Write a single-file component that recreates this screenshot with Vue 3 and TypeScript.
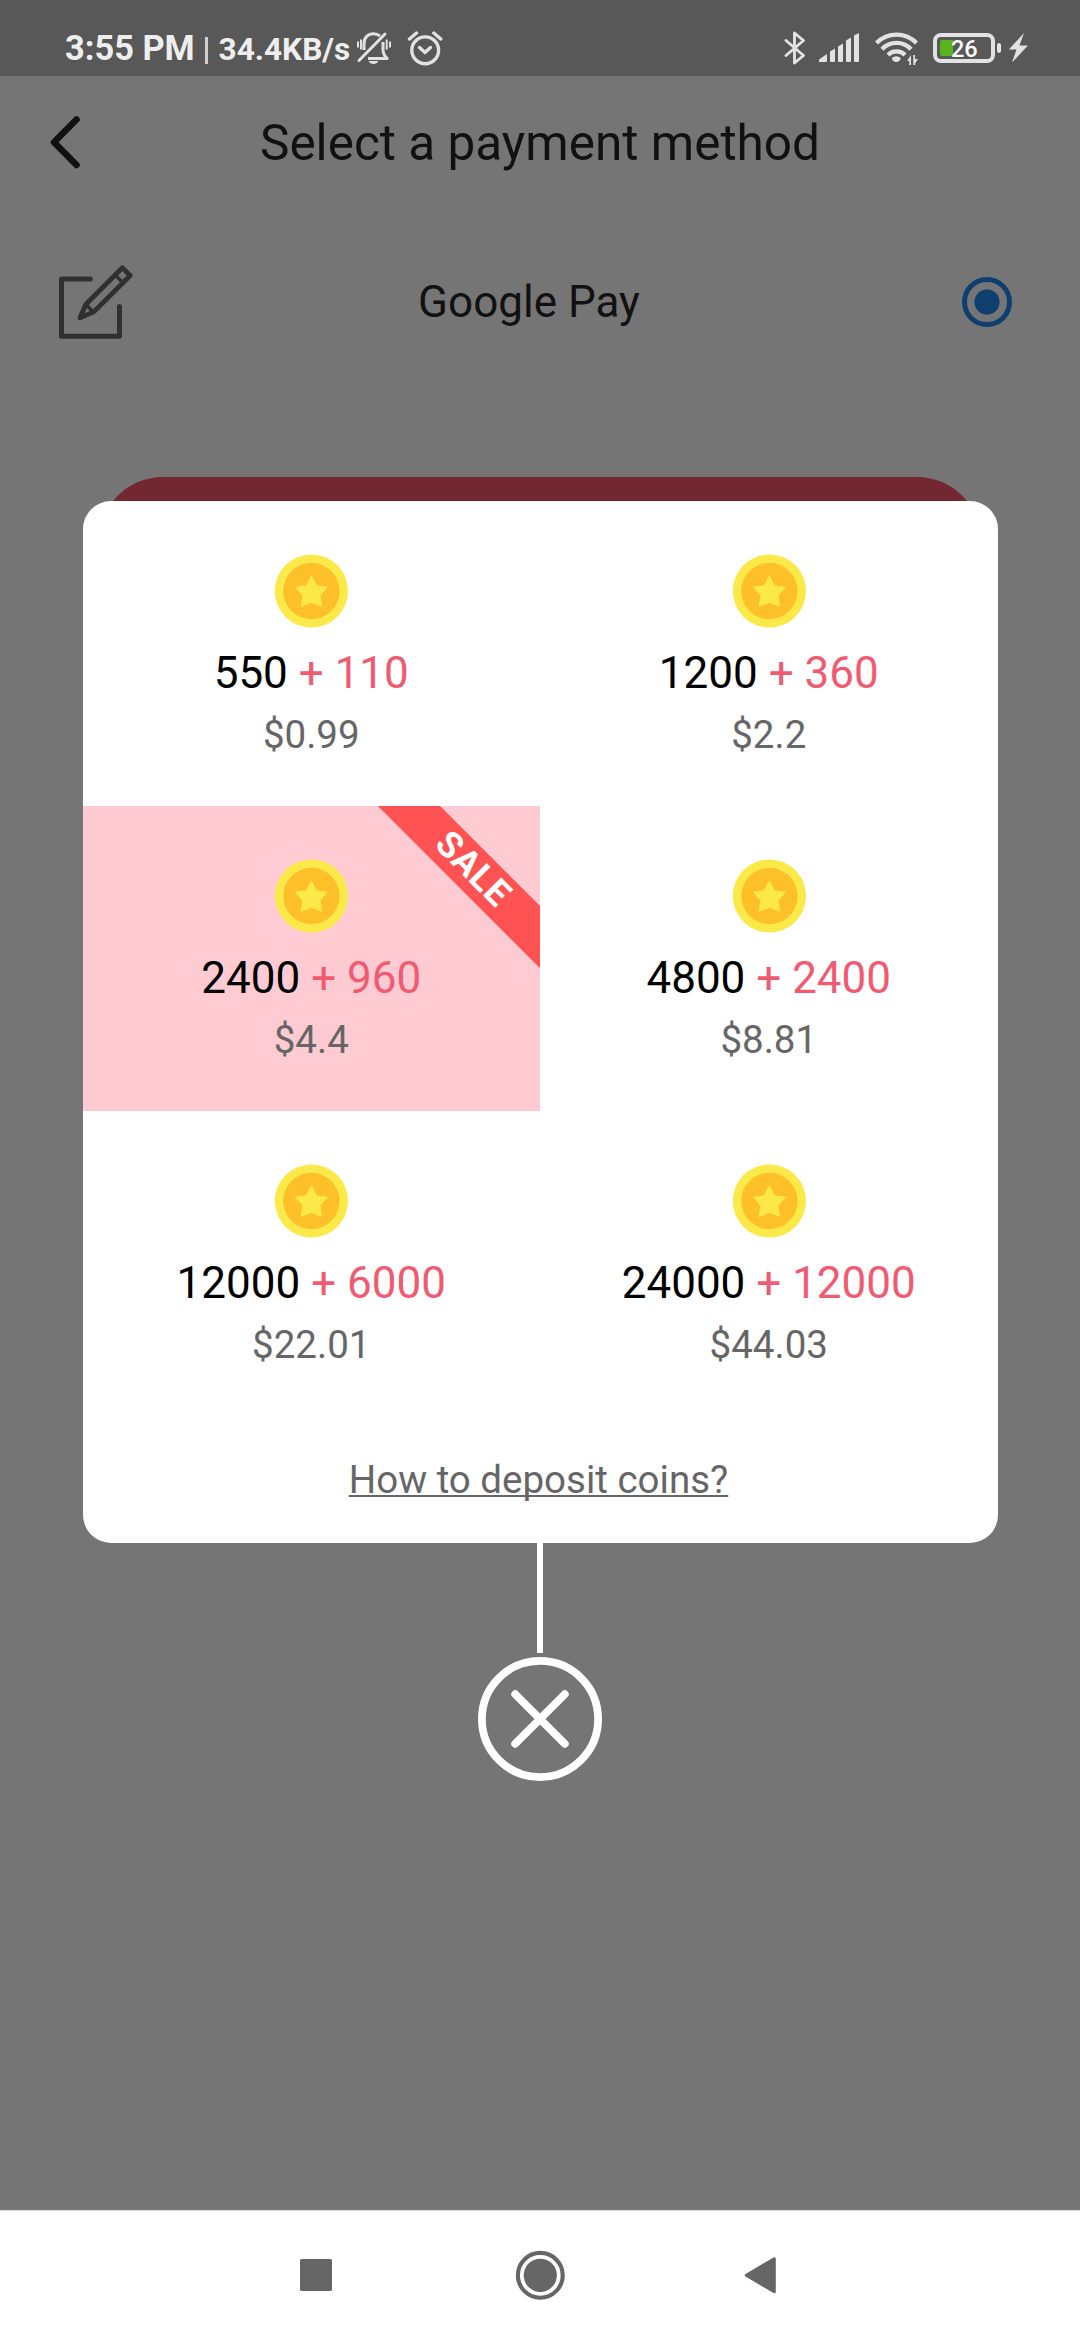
<script setup lang="ts">
interface CoinPack {
  coins: number
  bonus: number
  price: string
  sale?: boolean
}

const packs: CoinPack[] = [
  { coins: 550, bonus: 110, price: '$0.99' },
  { coins: 1200, bonus: 360, price: '$2.2' },
  { coins: 2400, bonus: 960, price: '$4.4', sale: true },
  { coins: 4800, bonus: 2400, price: '$8.81' },
  { coins: 12000, bonus: 6000, price: '$22.01' },
  { coins: 24000, bonus: 12000, price: '$44.03' },
]
</script>

<template>
  <div class="screen">
    <div class="status">
      <span class="time">3:55 PM</span>
      <span class="divider"></span>
      <span class="speed">34.4KB/s</span>
      <svg class="bell" width="36" height="36" viewBox="0 0 36 36" fill="none" stroke="#e2e2e2" stroke-width="3">
        <path d="M8 20V13.5C8 7.5 12 3.8 17.5 3.8C20 3.8 22.3 4.6 24 6" />
        <path d="M27 12V19.5C27 23 28.5 26 31.2 28.5H12" stroke-linejoin="round" />
        <path d="M3 30.5L29 4" stroke-linecap="round" />
        <path d="M2 11.5V17.5M5 9.5V19.5M30.7 9.5V19.5M34 11.5V17.5" stroke-width="2" />
        <path d="M12.5 31H22.5C21.5 33 19.7 34 17.5 34S13.5 33 12.5 31Z" fill="#e2e2e2" stroke="none" />
      </svg>
      <svg class="alarm" width="36" height="36" viewBox="0 0 36 36" fill="none" stroke="#e2e2e2" stroke-width="3.4" stroke-linecap="round">
        <circle cx="18.2" cy="20.3" r="13.4" />
        <path d="M12.5 17.5L18 22.5L23.5 17.5" stroke-linejoin="round" />
        <path d="M2.5 9L9.5 3M33.8 9L26.8 3" />
      </svg>
      <div class="spacer"></div>
      <svg class="bluetooth" width="24" height="36" viewBox="0 0 24 36" fill="none" stroke="#e2e2e2" stroke-width="2.9" stroke-linejoin="round" stroke-linecap="round">
        <path d="M2 10.5L19.5 25.5L10.5 33V3L19.5 10.5L2 25.5" />
      </svg>
      <svg class="signal" width="41" height="30" viewBox="0 0 41 30" fill="#e2e2e2">
        <path d="M0 29V26.5L8 21V28Q8 29 7 29H0Z" />
        <path d="M11 28V18.5L16 15.5V28Q16 29 15 29H12Q11 29 11 28Z" />
        <path d="M19 28V13.5L24 10.5V28Q24 29 23 29H20Q19 29 19 28Z" />
        <path d="M27 28V7.5L32 4.5V28Q32 29 31 29H28Q27 29 27 28Z" />
        <path d="M35 28V2.5L40 0V28Q40 29 39 29H36Q35 29 35 28Z" />
      </svg>
      <svg class="wifi" width="44" height="36" viewBox="0 0 44 36" fill="none" stroke="#e2e2e2" stroke-width="4.2">
        <path d="M1.5 13A28 28 0 0 1 41.5 13" />
        <path d="M7 19.2A20 20 0 0 1 36 19.2" />
        <path d="M13 25A12 12 0 0 1 30 25" />
        <path d="M16.8 28Q21.3 24.6 25.8 28Q25 32 21.3 32Q17.6 32 16.8 28Z" fill="#e2e2e2" stroke="none" />
        <path d="M36 25V35H34.3V31H32L36 25ZM38.3 35V25H40V29H43L40.3 33V35Z" fill="#e2e2e2" stroke="none" />
      </svg>
      <div class="battery">
        <span class="charge"></span>
        <span class="percent">26</span>
      </div>
      <span class="battery-cap"></span>
      <svg class="bolt" width="20" height="30" viewBox="0 0 20 30" fill="#e2e2e2">
        <path d="M16 0L0.8 16.5H8.5L4 29.5L20 12.5H11.5L16 0Z" />
      </svg>
    </div>

    <header class="header">
      <svg class="back" width="34" height="56" viewBox="0 0 34 56" fill="none" stroke="#111" stroke-width="6.6" stroke-linecap="round" stroke-linejoin="round">
        <path d="M28.5 4.5L6 27.3L28.5 50" />
      </svg>
      <h1>Select a payment method</h1>
    </header>

    <div class="method">
      <svg class="edit" width="78" height="78" viewBox="0 0 78 78" fill="none" stroke="#303030" stroke-width="5" stroke-linecap="round" stroke-linejoin="round">
        <path d="M35.3 16H6.5V73.2H64.5V43.6" />
        <path d="M67.3 4.8L75.2 12.5L38.8 48.9L25 54.8L31 41.2Z" stroke-width="4.8" />
        <path d="M60.3 12L67.8 19.6M31.5 42L38.3 49" stroke-width="3.4" />
      </svg>
      <span class="method-name">Google Pay</span>
      <span class="radio"></span>
    </div>

    <div class="pay-button"></div>

    <div class="overlay">
      <section class="dialog">
        <div class="packs">
          <div v-for="pack in packs" :key="pack.coins" class="pack" :class="{ selected: pack.sale }">
            <svg class="coin" width="74" height="74" viewBox="0 0 74 74">
              <circle cx="37.4" cy="37" r="36.6" fill="#fbe94a" />
              <circle cx="37.4" cy="37" r="28.2" fill="#fec029" />
              <path
                d="M37.4 21.9L42.6 31.9L53.3 33.2L46 41.3L47.5 52.3L37.4 48.3L27.3 52.3L28.8 41.3L21.5 33.2L32.2 31.9Z"
                fill="#fbe94a" stroke="#fbe94a" stroke-width="1" stroke-linejoin="round"
              />
            </svg>
            <div class="amount">{{ pack.coins }} <span class="bonus">+ {{ pack.bonus }}</span></div>
            <div class="price">{{ pack.price }}</div>
            <div v-if="pack.sale" class="ribbon">SALE</div>
          </div>
        </div>
        <div class="help"><a>How to deposit coins?</a></div>
      </section>
      <span class="stem"></span>
      <svg class="close" width="126" height="126" viewBox="0 0 126 126" fill="none" stroke="#fff" stroke-width="7.8" stroke-linecap="round">
        <circle cx="63" cy="63" r="58.1" />
        <path d="M38.2 38.2L87.8 87.8M87.8 38.2L38.2 87.8" />
      </svg>
    </div>

    <nav class="nav">
      <svg width="50" height="50" viewBox="0 0 50 50" fill="#666"><rect x="9" y="9" width="32" height="32" rx="1.5" /></svg>
      <svg class="home" width="50" height="50" viewBox="0 0 50 50">
        <circle cx="25.3" cy="25.3" r="22.4" fill="none" stroke="#666" stroke-width="4.1" />
        <circle cx="25.3" cy="25.3" r="16.6" fill="#666" />
      </svg>
      <svg width="50" height="50" viewBox="0 0 50 50" fill="#666" stroke="#666" stroke-width="3" stroke-linejoin="round">
        <path d="M11.3 25.2L39.3 8.8V41.8Z" />
      </svg>
    </nav>
  </div>
</template>

<style>
body {
  margin: 0;
}
</style>

<style scoped>
.screen {
  position: relative;
  display: flex;
  flex-direction: column;
  width: 1080px;
  height: 2340px;
  overflow: hidden;
  background: #757575;
  font-family: Roboto, sans-serif;
}
svg {
  display: block;
  flex: none;
}
.status {
  display: flex;
  align-items: center;
  box-sizing: border-box;
  height: 76px;
  padding: 20px 52px 0 65px;
  background: #585858;
  color: #eee;
  font-weight: 700;
  white-space: nowrap;
}
.time {
  width: 128px;
  font-size: 34.4px;
  line-height: 40px;
}
.divider {
  width: 3px;
  height: 27px;
  margin: 5px 11px 0 11.5px;
  background: #d0d0d0;
}
.speed {
  width: 132.5px;
  padding-top: 3px;
  font-size: 31.6px;
  line-height: 40px;
}
.bell {
  margin-left: 5px;
}
.alarm {
  margin-left: 15px;
}
.spacer {
  flex: 1;
}
.bluetooth {
  margin-right: 11px;
}
.signal {
  margin-right: 15px;
}
.wifi {
  margin-right: 14px;
}
.battery {
  display: flex;
  align-items: center;
  box-sizing: border-box;
  width: 62px;
  height: 30px;
  padding-left: 3px;
  border: 4px solid #e2e2e2;
  border-radius: 8px;
}
.charge {
  width: 13px;
  height: 16px;
  border-radius: 2px 0 0 2px;
  background: #58b31e;
}
.percent {
  margin-left: -2px;
  padding-top: 2px;
  color: #fff;
  font-size: 23.5px;
  font-weight: 500;
  line-height: 22px;
}
.battery-cap {
  width: 4px;
  height: 10px;
  margin: 0 7px 0 2px;
  border-radius: 2px;
  background: #e2e2e2;
}
.header {
  display: grid;
  grid-template-columns: 130px 1fr 130px;
  align-items: center;
  height: 134px;
}
.back {
  margin-left: 48px;
}
h1 {
  margin: 0;
  color: #111;
  font-size: 49.5px;
  font-weight: 400;
  line-height: 60px;
  text-align: center;
  white-space: nowrap;
}
.method {
  display: flex;
  align-items: center;
  box-sizing: border-box;
  height: 183px;
  padding: 0 68px 0 55px;
}
.method-name {
  flex: 1;
  padding: 1px 37px 0 0;
  color: #111;
  font-size: 44px;
  line-height: 60px;
  text-align: center;
}
.radio {
  box-sizing: border-box;
  width: 50px;
  height: 50px;
  border: 5.5px solid #0f3f6f;
  border-radius: 50%;
  background: radial-gradient(circle, #0f3f6f 12.2px, transparent 13px);
}
.pay-button {
  height: 128px;
  margin: 84px 99px 0;
  border-radius: 64px;
  background: #732731;
}
.overlay {
  position: absolute;
  inset: 0;
  display: flex;
  flex-direction: column;
  align-items: center;
  padding-top: 501px;
}
.dialog {
  width: 915px;
  height: 1041.5px;
  border-radius: 28px;
  background: #fff;
}
.packs {
  display: grid;
  grid-template-columns: 1fr 1fr;
  grid-auto-rows: 305px;
}
.pack {
  position: relative;
  display: flex;
  flex-direction: column;
  align-items: center;
  box-sizing: border-box;
  padding-top: 53px;
  overflow: hidden;
}
.coin {
  overflow: visible;
}
.pack.selected {
  background: #fecbd2;
}
.amount {
  margin-top: 15px;
  color: #000;
  font-size: 44px;
  line-height: 60px;
}
.bonus {
  color: #f15b72;
}
.price {
  margin-top: 6.5px;
  color: #666;
  font-size: 38.5px;
  line-height: 50px;
}
.ribbon {
  position: absolute;
  top: 43px;
  left: 261px;
  box-sizing: border-box;
  width: 260px;
  height: 43.8px;
  padding-right: 4px;
  background: #ff5252;
  color: #fff;
  font-size: 36px;
  font-weight: 700;
  letter-spacing: 0.8px;
  line-height: 43px;
  text-align: center;
  transform: rotate(45deg);
}
.help {
  display: flex;
  align-items: center;
  justify-content: center;
  height: 127px;
  padding-right: 3px;
  color: #666;
  font-size: 38.5px;
}
.help a {
  text-decoration: underline;
  text-decoration-thickness: 2px;
  text-underline-offset: 2px;
  text-decoration-skip-ink: none;
}
.stem {
  width: 6px;
  height: 110.5px;
  background: #fff;
}
.close {
  margin-top: 3px;
}
.nav {
  position: relative;
  display: flex;
  align-items: center;
  justify-content: space-between;
  box-sizing: border-box;
  height: 130px;
  margin-top: auto;
  padding: 0 295px 1px 291px;
  border-top: 1px solid #ddd;
  background: #fff;
}
.home {
  margin-left: 4px;
}
</style>
